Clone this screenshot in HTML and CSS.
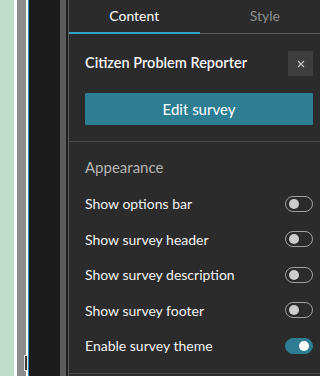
FILE: index.html
```html
<!DOCTYPE html>
<html lang="en">
<head>
  <meta charset="UTF-8">
  <title>Survey settings</title>
  <link rel="stylesheet" href="styles.css">
</head>
<body>
  <div class="layout">
    <!-- Left edge of the canvas and builder chrome -->
    <div class="strip strip-map"></div>
    <div class="strip strip-gap"></div>
    <div class="strip strip-scroll"></div>
    <div class="strip strip-gap narrow"></div>
    <div class="strip strip-accent"></div>
    <div class="strip strip-dark"></div>
    <div class="strip strip-handle"></div>
    <div class="strip strip-edge"></div>
    <div class="marker"></div>

    <!-- Settings panel -->
    <div class="panel">
      <div class="tabs">
        <div class="tab active">Content</div>
        <div class="tab">Style</div>
      </div>

      <div class="section">
        <div class="section-head">
          <span class="title">Citizen Problem Reporter</span>
          <button class="close" aria-label="Close">
            <svg width="8" height="8" viewBox="0 0 8 8">
              <path d="M1 1 L7 7 M7 1 L1 7" stroke="#c8c8c8" stroke-width="1.2" fill="none"/>
            </svg>
          </button>
        </div>
        <button class="primary">Edit survey</button>
      </div>

      <div class="section appearance">
        <div class="label">Appearance</div>
        <div class="row"><span>Show options bar</span><span class="toggle"></span></div>
        <div class="row"><span>Show survey header</span><span class="toggle"></span></div>
        <div class="row"><span>Show survey description</span><span class="toggle"></span></div>
        <div class="row"><span>Show survey footer</span><span class="toggle"></span></div>
        <div class="row"><span>Enable survey theme</span><span class="toggle on"></span></div>
      </div>
    </div>
  </div>
</body>
</html>
```

FILE: styles.css
```css
/* Reset */
* {
  margin: 0;
  padding: 0;
  box-sizing: border-box;
}
body {
  font-family: Lato, "Open Sans", sans-serif;
  background: #2b2b2b;
  overflow: hidden;
}
.layout {
  position: relative;
  display: flex;
  height: 376px;
  width: 320px;
  overflow: hidden;
}
/* Vertical strips on the left */
.strip {
  flex: none;
  height: 100%;
}
.strip-map { width: 14px; background: #c0dccb; }
.strip-gap { width: 3px; background: #ffffff; }
.strip-gap.narrow { width: 2px; }
.strip-scroll { width: 9px; background: #8c8c8c; }
.strip-accent { width: 1px; background: #2f8bb0; }
.strip-dark { width: 31px; background: #1b1b1b; }
.strip-handle { width: 6px; background: #5b5b5b; }
.strip-edge { width: 2px; background: #1e1e1e; }
.marker {
  position: absolute;
  left: 24px;
  top: 355px;
  width: 4px;
  height: 16px;
  border: 1px solid #e6e6e6;
  background: #3a3a3a;
}
/* Panel */
.panel {
  flex: none;
  width: 262px;
  height: 100%;
  background: #2b2b2b;
  border-left: 1px solid #5a5a5a;
  color: #f2f2f2;
}
.tabs {
  display: flex;
}
.tab {
  flex: 1;
  height: 34px;
  padding-top: 7px;
  text-align: center;
  font-size: 14px;
  color: #8f8f8f;
  border-bottom: 1px solid #5a5a5a;
}
.tab.active {
  color: #ffffff;
  border-bottom: 2px solid #2fa3bf;
}
.section {
  padding: 17px 18px 16px 16px;
  border-bottom: 1px solid #4a4a4a;
  width: 251px;
}
.section-head {
  display: flex;
  justify-content: space-between;
  align-items: flex-start;
}
.title {
  font-size: 14.5px;
  font-weight: 600;
  padding-top: 3px;
}
.close {
  width: 25px;
  height: 25px;
  margin-right: -11px;
  border: none;
  background: #3e3e3e;
  display: flex;
  align-items: center;
  justify-content: center;
}
.primary {
  display: block;
  width: 228px;
  height: 32px;
  margin-top: 17px;
  border: none;
  border-radius: 1px;
  background: #2d7d93;
  color: #ffffff;
  font-family: inherit;
  font-size: 15px;
}
.appearance {
  padding-top: 16px;
  padding-bottom: 0;
  height: 232px;
}
.label {
  font-size: 15px;
  color: #b4b4b4;
  margin-bottom: 10px;
}
.row {
  display: flex;
  justify-content: space-between;
  align-items: center;
  height: 35.5px;
  font-size: 14px;
  margin-right: -11px;
}
/* Toggle switch */
.toggle {
  position: relative;
  width: 28px;
  height: 16px;
  border: 1px solid #a0a0a0;
  border-radius: 8px;
}
.toggle::after {
  content: "";
  position: absolute;
  top: 2px;
  left: 3px;
  width: 10px;
  height: 10px;
  border-radius: 50%;
  background: #cccccc;
}
.toggle.on {
  background: #2d7d93;
  border-color: #2d7d93;
}
.toggle.on::after {
  left: auto;
  right: 3px;
  background: #ffffff;
}
```
